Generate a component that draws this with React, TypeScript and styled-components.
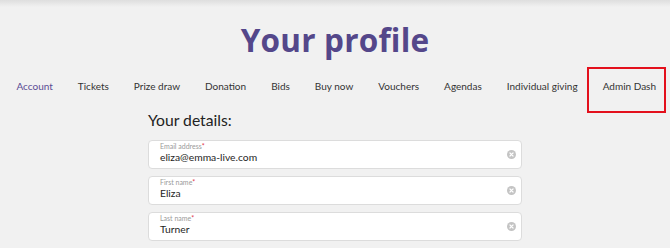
import styled, { createGlobalStyle } from "styled-components";

const GlobalStyle = createGlobalStyle`
  html, body {
    margin: 0;
    padding: 0;
    background: #f1f1f1;
  }
  body {
    font-family: Lato, "Liberation Sans", sans-serif;
    overflow: hidden;
  }
`;

const tabs = [
  "Account",
  "Tickets",
  "Prize draw",
  "Donation",
  "Bids",
  "Buy now",
  "Vouchers",
  "Agendas",
  "Individual giving",
  "Admin Dash",
];

const fields = [
  { label: "Email address", value: "eliza@emma-live.com" },
  { label: "First name", value: "Eliza" },
  { label: "Last name", value: "Turner" },
];

export default function App() {
  return (
    <>
      <GlobalStyle />
      <Page>
        <TopShade />
        <Title>Your profile</Title>
        <Nav>
          {tabs.map((t, i) => (
            <Tab key={t} active={i === 0} highlighted={t === "Admin Dash"}>
              {t}
            </Tab>
          ))}
        </Nav>
        <Form>
          <FormTitle>Your details:</FormTitle>
          {fields.map((f) => (
            <Field key={f.label}>
              <FieldText>
                <Label>
                  {f.label}
                  <Req>*</Req>
                </Label>
                <Value>{f.value}</Value>
              </FieldText>
              <ClearIcon viewBox="0 0 10 10">
                <circle cx="5" cy="5" r="5" fill="#c4c4c4" />
                <path
                  d="M3.3 3.3 L6.7 6.7 M6.7 3.3 L3.3 6.7"
                  stroke="#fff"
                  strokeWidth="1.3"
                  strokeLinecap="round"
                />
              </ClearIcon>
            </Field>
          ))}
        </Form>
      </Page>
    </>
  );
}

const Page = styled.div`
  width: 670px;
  height: 248px;
  display: flex;
  flex-direction: column;
  align-items: center;
  background: #f1f1f1;
  position: relative;
`;

const TopShade = styled.div`
  position: absolute;
  top: 0;
  left: 0;
  right: 0;
  height: 7px;
  background: linear-gradient(#dedede, rgba(241, 241, 241, 0));
`;

const Title = styled.h1`
  margin: 20px 0 0;
  font-family: "Open Sans", "Liberation Sans", sans-serif;
  font-weight: 700;
  font-size: 31.5px;
  line-height: 40px;
  color: #54478a;
  letter-spacing: 0.2px;
`;

const Nav = styled.nav`
  display: flex;
  justify-content: center;
  align-items: flex-start;
  margin-top: 7px;
`;

const Tab = styled.div<{ active?: boolean; highlighted?: boolean }>`
  font-size: 10px;
  line-height: 14px;
  color: ${(p) => (p.active ? "#5a4c94" : "#333")};
  padding: ${(p) => (p.highlighted ? "10px 8px 18px 14px" : "12px 12.5px")};
  margin-left: ${(p) => (p.highlighted ? "-3.5px" : "0")};
  border: ${(p) => (p.highlighted ? "2px solid #e3101c" : "none")};
  white-space: nowrap;
`;

const Form = styled.div`
  width: 374px;
  display: flex;
  flex-direction: column;
  gap: 7px;
  margin-top: -2.5px;
`;

const FormTitle = styled.div`
  font-size: 15.7px;
  line-height: 19px;
  color: #222;
  margin-bottom: 3px;
`;

const Field = styled.div`
  height: 29px;
  box-sizing: border-box;
  background: #fff;
  border: 1px solid #dcdcdc;
  border-radius: 4px;
  display: flex;
  align-items: center;
  padding: 0 5px 0 11px;
`;

const FieldText = styled.div`
  flex: 1;
  align-self: flex-start;
  display: flex;
  flex-direction: column;
  padding-top: 1px;
`;

const Label = styled.div`
  font-size: 7px;
  line-height: 8px;
  color: #9a9a9a;
`;

const Req = styled.span`
  color: #e0344a;
  font-size: 7px;
  vertical-align: top;
`;

const Value = styled.div`
  font-size: 10.3px;
  line-height: 13px;
  margin-top: 1.5px;
  color: #1e1e1e;
`;

const ClearIcon = styled.svg`
  width: 9px;
  height: 9px;
`;
